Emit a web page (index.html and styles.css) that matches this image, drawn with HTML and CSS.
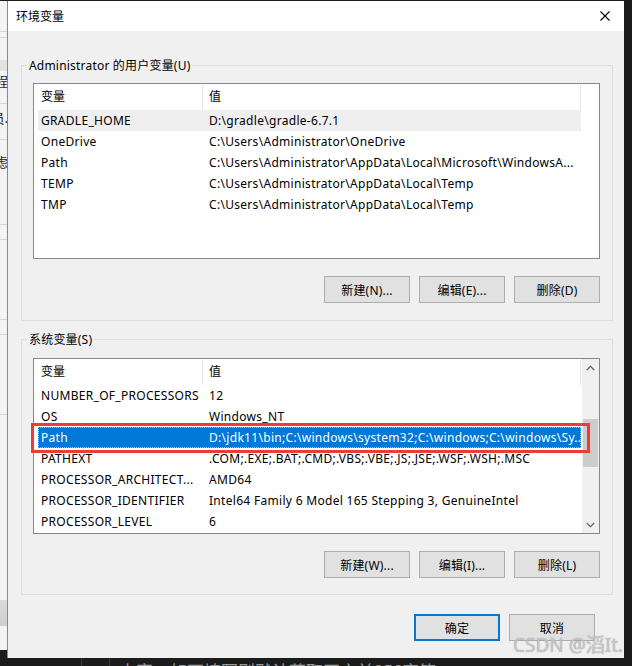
FILE: index.html
```html
<!DOCTYPE html>
<html lang="zh-CN">
<head>
<meta charset="utf-8">
<title>环境变量</title>
<link rel="stylesheet" href="styles.css">
</head>
<body>
<div class="screen">
  <div class="backdrop-left">
    <div class="bl-line l1"></div>
    <div class="bl-line l2"></div>
    <div class="bl-block b1"></div>
    <div class="bl-frag f1">程</div>
    <div class="bl-line l3"></div>
    <div class="bl-frag f2">员.</div>
    <div class="bl-line l4"></div>
    <div class="bl-frag f3">虑</div>
    <div class="bl-line l5"></div>
    <div class="bl-line l6"></div>
    <div class="bl-line l7"></div>
    <div class="bl-line l8"></div>
    <div class="bl-line l9"></div>
    <div class="bl-block b2"></div>
  </div>
  <div class="backdrop-bottom">
    <span class="vline v1"></span><span class="vline v2"></span>
    <span class="bottom-text">内容，如不填写则默认获取正文前256字符</span>
  </div>

  <div class="dialog">
    <div class="titlebar">
      <span class="title">环境变量</span>
      <svg class="close" width="10" height="10" viewBox="0 0 10 10"><path d="M0.5 0.5 L9.5 9.5 M9.5 0.5 L0.5 9.5" stroke="#000" stroke-width="1.1" fill="none"/></svg>
    </div>
    <div class="dialog-body">
      <div class="group">
        <span class="group-label">Administrator 的用户变量(U)</span>
        <div class="listbox">
          <div class="list-main">
            <div class="list-header"><div class="hcell c1">变量</div><div class="hcell c2">值</div></div>
            <div class="row hot"><div class="cell c1">GRADLE_HOME</div><div class="cell c2">D:\gradle\gradle-6.7.1</div></div>
            <div class="row"><div class="cell c1">OneDrive</div><div class="cell c2">C:\Users\Administrator\OneDrive</div></div>
            <div class="row"><div class="cell c1">Path</div><div class="cell c2">C:\Users\Administrator\AppData\Local\Microsoft\WindowsA...</div></div>
            <div class="row"><div class="cell c1">TEMP</div><div class="cell c2">C:\Users\Administrator\AppData\Local\Temp</div></div>
            <div class="row"><div class="cell c1">TMP</div><div class="cell c2">C:\Users\Administrator\AppData\Local\Temp</div></div>
          </div>
        </div>
        <div class="btn-row">
          <button class="btn">新建(N)...</button>
          <button class="btn">编辑(E)...</button>
          <button class="btn">删除(D)</button>
        </div>
      </div>

      <div class="group group-sys">
        <span class="group-label">系统变量(S)</span>
        <div class="listbox">
          <div class="list-main">
            <div class="list-header"><div class="hcell c1">变量</div><div class="hcell c2">值</div></div>
            <div class="row"><div class="cell c1">NUMBER_OF_PROCESSORS</div><div class="cell c2">12</div></div>
            <div class="row"><div class="cell c1">OS</div><div class="cell c2">Windows_NT</div></div>
            <div class="row selected"><div class="cell c1">Path</div><div class="cell c2">D:\jdk11\bin;C:\windows\system32;C:\windows;C:\windows\Sy...</div></div>
            <div class="row"><div class="cell c1">PATHEXT</div><div class="cell c2">.COM;.EXE;.BAT;.CMD;.VBS;.VBE;.JS;.JSE;.WSF;.WSH;.MSC</div></div>
            <div class="row"><div class="cell c1">PROCESSOR_ARCHITECT...</div><div class="cell c2">AMD64</div></div>
            <div class="row"><div class="cell c1">PROCESSOR_IDENTIFIER</div><div class="cell c2">Intel64 Family 6 Model 165 Stepping 3, GenuineIntel</div></div>
            <div class="row"><div class="cell c1">PROCESSOR_LEVEL</div><div class="cell c2">6</div></div>
          </div>
          <div class="scrollbar">
            <div class="sb-arrow"><svg width="9" height="6" viewBox="0 0 9 6"><path d="M0.8 5 L4.5 1.3 L8.2 5" stroke="#606060" stroke-width="1.2" fill="none"/></svg></div>
            <div class="sb-thumb"></div>
            <div class="sb-spacer"></div>
            <div class="sb-arrow"><svg width="9" height="6" viewBox="0 0 9 6"><path d="M0.8 1 L4.5 4.7 L8.2 1" stroke="#606060" stroke-width="1.2" fill="none"/></svg></div>
          </div>
          <div class="annot"></div>
        </div>
        <div class="btn-row">
          <button class="btn">新建(W)...</button>
          <button class="btn">编辑(I)...</button>
          <button class="btn">删除(L)</button>
        </div>
      </div>

      <div class="footer">
        <button class="btn primary">确定</button>
        <button class="btn">取消</button>
      </div>
    </div>
  </div>

  <div class="watermark">CSDN @滔It.</div>
</div>
</body>
</html>
```
FILE: styles.css
```css
html, body {
  margin: 0;
  padding: 0;
  background: #1c1c1c;
}

.screen {
  position: relative;
  width: 632px;
  height: 666px;
  overflow: hidden;
  background: #1c1c1c;
  font-family: "Noto Sans", "Noto Sans CJK SC", sans-serif;
  color: #000;
}

/* page behind the dialog (left strip) */
.backdrop-left {
  position: absolute;
  left: 0;
  top: 1px;
  width: 8px;
  height: 657px;
  background: #f3f3f3;
  overflow: hidden;
}
.bl-line { height: 1px; background: #d6d6d6; }
.bl-line.l1 { margin-top: 30px; }
.bl-line.l2 { margin-top: 5px; }
.bl-block.b1 { height: 11px; margin-top: 22px; background: #e2e2e2; }
.bl-frag {
  display: flex;
  justify-content: flex-end;
  width: 8px;
  font-size: 13px;
  line-height: 14px;
  color: #222;
  white-space: nowrap;
  font-family: "Noto Sans CJK SC", sans-serif;
}
.bl-frag.f1 { margin-top: 3px; }
.bl-line.l3 { margin-top: 15px; }
.bl-frag.f2 { margin-top: 7px; }
.bl-line.l4 { margin-top: 14px; }
.bl-frag.f3 { margin-top: 15px; }
.bl-line.l5 { margin-top: 55px; }
.bl-line.l6 { margin-top: 14px; }
.bl-line.l7 { margin-top: 79px; }
.bl-line.l8 { margin-top: 14px; }
.bl-line.l9 { margin-top: 79px; }
.bl-block.b2 { height: 26px; margin-top: 185px; background: linear-gradient(#d9d9d9, #cfcfcf); }

/* page behind the dialog (bottom strip) */
.backdrop-bottom {
  position: absolute;
  left: 0;
  top: 650px;
  width: 632px;
  height: 16px;
  background: #1c1c1c;
}
.vline {
  position: absolute;
  top: 0;
  width: 1px;
  height: 16px;
  background: #3a3a3a;
}
.vline.v1 { left: 81px; }
.vline.v2 { left: 109px; }
.bottom-text {
  position: absolute;
  left: 119px;
  top: 12px;
  font-family: "Noto Sans CJK SC", sans-serif;
  font-size: 17px;
  line-height: 18px;
  color: #9a9a9a;
  white-space: nowrap;
}

/* dialog window */
.dialog {
  position: absolute;
  left: 7px;
  top: 1px;
  width: 617px;
  height: 657px;
  box-sizing: border-box;
  border-left: 1px solid #8a8a8a;
  background: #f0f0f0;
  display: flex;
  flex-direction: column;
}

.titlebar {
  height: 30px;
  flex: none;
  background: #fff;
  display: flex;
  align-items: center;
  justify-content: space-between;
  padding: 0 14px 0 8px;
}
.title {
  font-family: "Noto Sans CJK SC", sans-serif;
  font-size: 12px;
  line-height: 16px;
  margin-top: -1px;
}
.close { display: block; margin-top: -1px; }

.dialog-body {
  padding: 34px 0 0 13px;
}

.group {
  position: relative;
  width: 592px;
  box-sizing: border-box;
  border: 1px solid #dcdcdc;
  padding: 17px 12px 17px 11px;
}
.group-sys {
  margin-top: 18px;
  padding-top: 18px;
  padding-bottom: 16px;
}
.group-label {
  position: absolute;
  top: -8px;
  left: 5px;
  padding: 0 2px;
  background: #f0f0f0;
  font-size: 12px;
  line-height: 16px;
  letter-spacing: 0.2px;
  white-space: nowrap;
}

.listbox {
  position: relative;
  height: 176px;
  box-sizing: border-box;
  border: 1px solid #828790;
  background: #fff;
  display: flex;
}
.list-main {
  flex: 1;
  min-width: 0;
  overflow: hidden;
}
.list-header {
  display: flex;
  height: 26px;
}
.hcell {
  box-sizing: border-box;
  height: 26px;
  line-height: 26px;
  font-size: 12px;
  white-space: nowrap;
  border-right: 1px solid #e5e5e5;
  border-image: linear-gradient(to bottom, transparent 2px, #e5e5e5 2px) 1;
}
.hcell.c1 { width: 169px; padding-left: 7px; }
.hcell.c2 { width: 378px; padding-left: 6px; }

.row {
  display: flex;
  height: 21px;
  width: 543px;
  margin-left: 4px;
  line-height: 21px;
  font-size: 12px;
  letter-spacing: 0.3px;
}
.cell {
  box-sizing: border-box;
  white-space: nowrap;
  overflow: hidden;
}
.cell.c1 { width: 164px; padding-left: 3px; }
.cell.c2 { width: 379px; padding-left: 7px; }
.row.hot { background: #efefef; }
.row.selected {
  background: #0078d7;
  color: #fff;
  outline: 1px dotted #f2b25a;
  outline-offset: -1px;
}

.scrollbar {
  width: 17px;
  flex: none;
  background: #f0f0f0;
  display: flex;
  flex-direction: column;
}
.sb-arrow {
  height: 17px;
  display: flex;
  align-items: center;
  justify-content: center;
}
.sb-thumb {
  height: 48px;
  width: 15px;
  margin: 43px 0 0 1px;
  background: #cdcdcd;
}
.sb-spacer { flex: 1; }

.annot {
  position: absolute;
  left: -3px;
  top: 64px;
  width: 559px;
  height: 30px;
  box-sizing: border-box;
  border: 3px solid #ee3a3a;
}

.btn-row {
  display: flex;
  justify-content: flex-end;
  gap: 9px;
  margin-top: 17px;
}
.btn {
  width: 86px;
  height: 27px;
  box-sizing: border-box;
  margin: 0;
  padding: 0;
  background: #e1e1e1;
  border: 1px solid #adadad;
  border-radius: 0;
  font-family: "Noto Sans", "Noto Sans CJK SC", sans-serif;
  font-size: 12px;
  color: #000;
  letter-spacing: 0.2px;
}
.btn.primary { border: 2px solid #0078d7; }

.footer {
  display: flex;
  justify-content: flex-end;
  gap: 9px;
  width: 592px;
  box-sizing: border-box;
  padding-right: 18px;
  margin-top: 19px;
}

.watermark {
  position: absolute;
  left: 513px;
  top: 633px;
  font-family: "Noto Sans", "Noto Sans CJK SC", sans-serif;
  font-size: 19px;
  line-height: 24px;
  color: rgba(205, 205, 205, 0.9);
  text-shadow: 0 0 1px rgba(120, 120, 120, 0.8);
  white-space: nowrap;
}
```
